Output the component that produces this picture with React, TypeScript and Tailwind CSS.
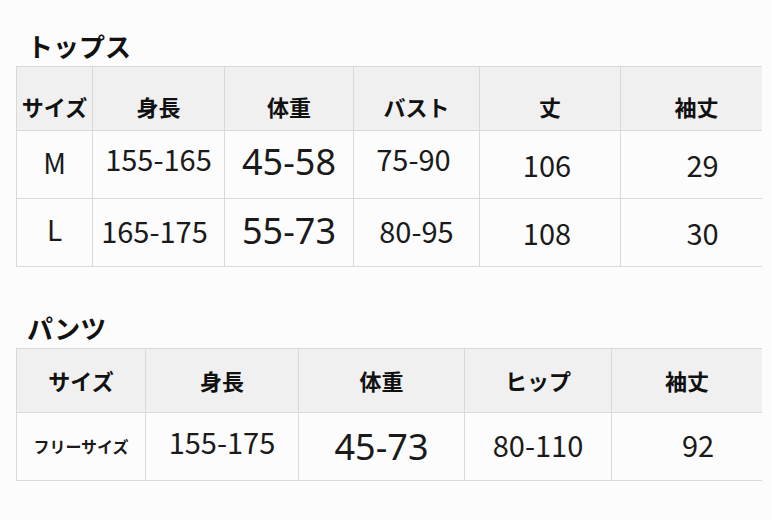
import React from "react";

const jp = "font-['Noto_Sans_CJK_JP','Noto_Sans',sans-serif]";
const wide = "font-['Noto_Sans','Noto_Sans_CJK_JP',sans-serif]";

const num = `${jp} text-[29px]`;
const big = `${wide} text-[36px]`;

type Cell = { text: string; cls?: string };

const tops = {
  cols: "grid-cols-[77px_132px_129px_126px_141px_141px]",
  head: ["サイズ", "身長", "体重", "バスト", "丈", "袖丈"],
  rows: [
    [
      { text: "M", cls: `${jp} text-[28px] pb-[6px]` },
      { text: "155-165", cls: `${num} pb-[12px]` },
      { text: "45-58", cls: `${big} pb-[5px]` },
      { text: "75-90", cls: `${num} pb-[12px] pr-[6px]` },
      { text: "106", cls: `${num} pr-[6px]` },
      { text: "29", cls: `${num} pl-[22px]` },
    ],
    [
      { text: "L", cls: `${jp} text-[28px] pb-[8px]` },
      { text: "165-175", cls: `${num} pb-[4px] pr-[8px]` },
      { text: "55-73", cls: `${big} pb-[3px]` },
      { text: "80-95", cls: `${num} pb-[4px]` },
      { text: "108", cls: `${num} pr-[6px]` },
      { text: "30", cls: `${num} pl-[22px]` },
    ],
  ] as Cell[][],
};

const pants = {
  cols: "grid-cols-[130px_153px_166px_147px_150px]",
  head: ["サイズ", "身長", "体重", "ヒップ", "袖丈"],
  rows: [
    [
      { text: "フリーサイズ", cls: `${jp} text-[16px] font-bold pb-[2px]` },
      { text: "155-175", cls: `${num} pb-[10px]` },
      { text: "45-73", cls: `${big}` },
      { text: "80-110", cls: `${num} pb-[4px]` },
      { text: "92", cls: `${num} pb-[4px] pl-[22px]` },
    ],
  ] as Cell[][],
};

function SizeTable({
  cols,
  head,
  rows,
  headPad,
  lastHeadPad,
}: {
  cols: string;
  head: string[];
  rows: Cell[][];
  headPad: string;
  lastHeadPad: string;
}) {
  const last = head.length - 1;
  return (
    <div className={`grid ${cols} border-t border-[#d9d9d9]`}>
      {head.map((h, i) => (
        <div
          key={h}
          className={`flex h-[64px] items-center justify-center bg-[#f0f0f0] border-b border-[#d9d9d9] ${
            i < last ? "border-r" : ""
          } ${i === 0 ? "border-l" : ""} ${headPad} ${i === last ? lastHeadPad : ""} ${jp} text-[22px] font-bold text-[#111]`}
        >
          {h}
        </div>
      ))}
      {rows.map((row, r) =>
        row.map((c, i) => (
          <div
            key={`${r}-${i}`}
            className={`flex h-[68px] items-center justify-center whitespace-nowrap border-b border-[#d9d9d9] ${
              i < last ? "border-r" : ""
            } ${i === 0 ? "border-l" : ""} text-[#1a1a1a] leading-none ${c.cls ?? ""}`}
          >
            {c.text}
          </div>
        ))
      )}
    </div>
  );
}

export default function App() {
  return (
    <main className="h-[520px] w-[772px] overflow-hidden bg-[#fcfcfc] pl-4 pr-[10px]">
      <h2 className={`mt-[29px] mb-[3px] pl-[11px] ${jp} text-[26px] font-bold leading-[34px] text-[#111]`}>
        トップス
      </h2>
      <SizeTable {...tops} headPad="pt-[16px]" lastHeadPad="pl-[10px]" />

      <h2 className={`mt-[44px] mb-[3px] pl-[11px] ${jp} text-[26px] font-bold leading-[34px] text-[#111]`}>
        パンツ
      </h2>
      <SizeTable {...pants} headPad="" lastHeadPad="" />
    </main>
  );
}
